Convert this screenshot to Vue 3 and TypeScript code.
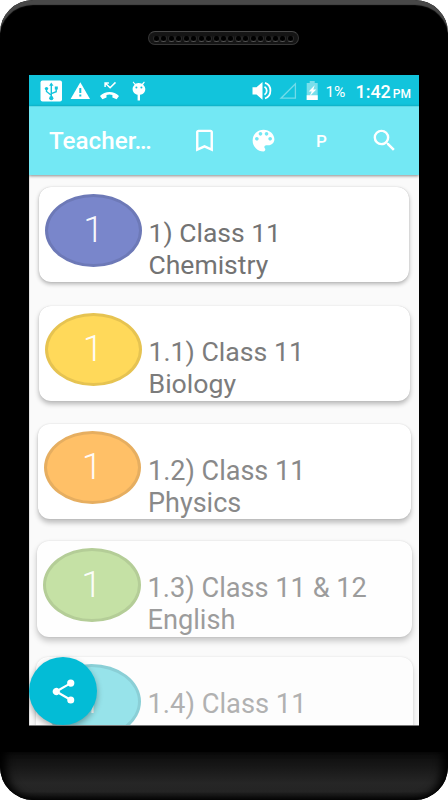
<script setup lang="ts">
interface Subject {
  id: string
  line1: string
  line2: string
  tone: string
}

const subjects: Subject[] = [
  { id: 'chemistry', line1: '1) Class 11', line2: 'Chemistry', tone: 'indigo' },
  { id: 'biology', line1: '1.1) Class 11', line2: 'Biology', tone: 'yellow' },
  { id: 'physics', line1: '1.2) Class 11', line2: 'Physics', tone: 'orange' },
  { id: 'english', line1: '1.3) Class 11 & 12', line2: 'English', tone: 'green' },
  { id: 'next', line1: '1.4) Class 11', line2: '', tone: 'cyan' },
]
const holes = 19
</script>

<template>
  <div class="phone">
    <div class="speaker"><span v-for="n in holes" :key="n" class="hole"></span></div>
    <div class="screen">
      <header class="status">
        <svg class="status-left" viewBox="0 0 110 31" width="110" height="31">
          <rect x="0.5" y="5.500" width="21.500" height="21" rx="2" fill="#fff" />
          <g fill="none" stroke="#12c4dc" stroke-width="1.400">
            <path d="M11.300 10v13M6.500 13.500v3l4.800 3.700M16.200 13v3.700l-4.900 2" />
          </g>
          <path d="M11.300 7.500l2.200 3.200h-4.400z" fill="#12c4dc" />
          <circle cx="11.300" cy="23.200" r="2.100" fill="#12c4dc" />
          <circle cx="6.500" cy="13.600" r="1.700" fill="#12c4dc" />
          <path d="M14.800 11.500h3v3h-3z" fill="#12c4dc" />
          <path d="M40.300 7.200L50 24H30.600z" fill="#fff" />
          <path d="M39.300 13h2v5h-2zM39.300 19.500h2v2h-2z" fill="#12c4dc" />
          <path d="M60 21c5-5.300 14-5.300 19 0l-2.400 3.300-4.200-1.800v-2.600c-1.900-.7-4-.7-5.900 0v2.600l-4.100 1.800z" fill="#fff" />
          <path d="M65.100 12V8h3.800M65.400 8.300l4.700 4.500 5.400-5.400" fill="none" stroke="#fff" stroke-width="1.500" />
          <path d="M93.200 6.500l2.200 2.300a7 7 0 0 1 6.600 0L104 6.500l.8.7-1.700 2.500c1.400 1.200 2.200 2.800 2.200 4.300 0 3.200-2.300 5.500-5.300 5.700V25.500h-2.400v-5.800c-2.900-.3-5-2.700-5-5.700 0-1.600.8-3.100 2-4.200l-1.900-2.600z" fill="#fff" />
          <circle cx="96.400" cy="12.500" r="1" fill="#12c4dc" />
          <circle cx="101.400" cy="12.500" r="1" fill="#12c4dc" />
        </svg>
        <div class="status-right">
          <svg viewBox="0 0 68 31" width="68" height="31">
            <path d="M1.500 12.200h4l6-5.200v17.700l-6-5.200h-4z" fill="#fff" />
            <path d="M13.500 11.700c3 1.800 3 6 0 8M14 7.800c7.200 2.200 7.200 13.400 0 15.700" fill="none" stroke="#fff" stroke-width="1.800" />
            <path d="M44.400 8.800v14.400H30z" fill="none" stroke="#71dbe9" stroke-width="1.300" />
            <path d="M55.700 8h3V6h5v2h3v17h-11z" fill="#79dfeb" />
            <path d="M55.700 20.200h11V25h-11z" fill="#fff" />
            <path d="M63.700 10.200l-6 6.300h3l-2 4.700 6.600-6.600h-3z" fill="#fff" />
          </svg>
          <span class="battery">1%</span>
          <span class="clock">1:42<small>PM</small></span>
        </div>
      </header>

      <div class="toolbar">
        <h1>Teacher…</h1>
        <div class="actions">
          <svg viewBox="0 0 24 24" width="29" height="29"><path d="M17 3H7c-1.100 0-2 .9-2 2v16l7-3 7 3V5c0-1.100-.9-2-2-2zm0 15l-5-2.180L7 18V5h10v13z" /></svg>
          <svg viewBox="0 0 24 24" width="29" height="29"><path d="M12 3a9 9 0 0 0 0 18c.83 0 1.500-.67 1.500-1.500 0-.39-.15-.74-.39-1.010-.23-.26-.38-.61-.38-.99 0-.83.67-1.500 1.500-1.500H16c2.760 0 5-2.240 5-5 0-4.420-4.030-8-9-8zm-5.500 9c-.83 0-1.500-.67-1.500-1.500S5.670 9 6.500 9 8 9.670 8 10.500 7.330 12 6.500 12zm3-4C8.670 8 8 7.330 8 6.500S8.670 5 9.500 5s1.500.67 1.500 1.500S10.330 8 9.500 8zm5 0c-.83 0-1.500-.67-1.500-1.500S13.670 5 14.500 5s1.500.67 1.500 1.500S15.330 8 14.500 8zm3 4c-.83 0-1.500-.67-1.500-1.500S16.670 9 17.500 9s1.500.67 1.500 1.500-.67 1.500-1.500 1.500z" /></svg>
          <span class="letter">P</span>
          <svg viewBox="0 0 24 24" width="29" height="29"><path d="M15.500 14h-.79l-.28-.27A6.471 6.471 0 0 0 16 9.500 6.500 6.500 0 1 0 9.500 16c1.610 0 3.090-.59 4.230-1.570l.27.28v.79l5 4.990L20.490 19l-4.990-5zm-6 0C7.010 14 5 11.990 5 9.500S7.010 5 9.500 5 14 7.010 14 9.500 11.990 14 9.500 14z" /></svg>
        </div>
      </div>

      <main class="list">
        <article v-for="s in subjects" :key="s.id" class="card" :class="s.tone">
          <div class="badge"><span>1</span></div>
          <p>{{ s.line1 }}<br />{{ s.line2 }}</p>
        </article>
      </main>

      <button class="share" aria-label="Share">
        <svg viewBox="0 0 24 24" width="29" height="29"><path d="M18 16.080c-.76 0-1.440.3-1.960.77L8.910 12.700c.05-.23.09-.46.09-.7s-.04-.47-.09-.7l7.050-4.110c.54.5 1.250.81 2.040.81a3 3 0 1 0-3-3c0 .24.04.47.09.7L8.040 9.810A3 3 0 1 0 6 15c.79 0 1.500-.31 2.040-.81l7.120 4.160c-.05.21-.08.43-.08.65A2.920 2.920 0 1 0 18 16.080z" /></svg>
      </button>
    </div>
    <div class="chin"></div>
  </div>
</template>

<style>
body {
  background: #fff;
  overflow: hidden;
}
</style>

<style scoped>
.phone {
  box-sizing: border-box;
  width: 448px;
  height: 800px;
  display: flex;
  flex-direction: column;
  align-items: center;
  overflow: hidden;
  border-radius: 33px;
  background: #000;
  box-shadow: inset 0 6px 1px -1px #484848;
  font-family: Roboto, "Liberation Sans", sans-serif;
}
.speaker {
  box-sizing: border-box;
  flex: none;
  width: 151px;
  height: 14px;
  margin: 31px 1px 30px 0;
  padding: 3px 4px 0;
  border: 1px solid #363636;
  border-top-color: #484848;
  border-radius: 7px;
  background: #151515;
  display: flex;
  justify-content: space-between;
}
.hole {
  box-sizing: border-box;
  width: 7px;
  height: 7px;
  border: 1px solid #292929;
  border-top-color: #151515;
  border-bottom-color: #555;
  border-radius: 50%;
  background: #000;
}
.screen {
  box-sizing: border-box;
  position: relative;
  flex: none;
  width: 390px;
  height: 651px;
  display: flex;
  flex-direction: column;
  overflow: hidden;
  border-bottom: 1px solid #777;
  background: #fafafa;
  box-shadow: inset 1px 0 #e4e4e4;
}
.status {
  flex: none;
  height: 31px;
  padding: 0 9px 0 11px;
  display: flex;
  justify-content: space-between;
  background: #12c4dc;
  color: #fff;
}
.status-right {
  display: flex;
  align-items: center;
}
.battery {
  width: 20px;
  margin-left: 6px;
  font-size: 15.5px;
  line-height: 31px;
  padding-top: 3px;
}
.clock {
  margin-left: 10px;
  margin-right: -1px;
  font-size: 18px;
  font-weight: 500;
  line-height: 31px;
  padding-top: 4px;
}
.clock small {
  margin-left: 2px;
  font-size: 12px;
}
.toolbar {
  z-index: 1;
  box-sizing: border-box;
  flex: none;
  height: 69px;
  padding: 0 20px;
  display: flex;
  align-items: center;
  justify-content: space-between;
  border-top: 1px solid #60d9e6;
  background: #73e8f4;
  color: #fff;
  box-shadow: 0 1px 3px rgba(0, 0, 0, 0.45);
}
h1 {
  margin: 0;
  padding-bottom: 1px;
  font-size: 24.2px;
  font-weight: 500;
}
.actions {
  display: flex;
  gap: 29px;
  align-items: center;
  margin-top: -1px;
}
.actions svg,
.share svg {
  display: block;
  fill: #fff;
}
.actions svg:first-child {
  margin-right: 1px;
}
.actions svg:nth-child(2) {
  margin-right: -1px;
}
.letter {
  width: 31px;
  margin-right: 4px;
  padding-top: 1px;
  text-align: center;
  font-size: 17px;
  font-weight: 500;
}
.list {
  padding: 12px 10px 0;
  display: flex;
  flex-direction: column;
}
.card {
  box-sizing: border-box;
  flex: none;
  height: 95px;
  margin-bottom: 24px;
  padding: 7px 0 0 6px;
  display: flex;
  gap: 7px;
  border-radius: 12px;
  background: #fff;
  box-shadow: 0 2px 4px rgba(0, 0, 0, 0.29), 0 0 1px rgba(0, 0, 0, 0.2);
}
.badge {
  box-sizing: border-box;
  flex: none;
  width: 97px;
  height: 73px;
  border: 3px solid;
  border-radius: 50%;
  display: grid;
  place-items: center;
  color: rgba(255, 255, 255, 0.95);
  font-size: 37px;
  font-weight: 300;
  line-height: 1;
}
.badge span {
  margin-top: -2px;
}
.card p {
  margin: 24px 0 0;
  color: #737373;
  font-size: 27px;
  line-height: 32px;
  white-space: nowrap;
}
.indigo .badge {
  background: #7986cb;
  border-color: #6d79b7;
}
.card.indigo p {
  margin: 23px 0 0 -0.5px;
  font-size: 26.5px;
}
.yellow {
  margin: 0 -0.5px 23px;
  box-shadow: 0 3px 5px rgba(0, 0, 0, 0.27), 0 0 1px rgba(0, 0, 0, 0.18);
}
.yellow .badge {
  background: #ffd95a;
  border-color: #e6c351;
}
.card.yellow p {
  margin-top: 23px;
  color: #7c7c7c;
  font-size: 26.7px;
}
.orange {
  margin: 0 -1.5px 22px;
  box-shadow: 0 4px 5px rgba(0, 0, 0, 0.23), 0 0 2px rgba(0, 0, 0, 0.14);
}
.orange .badge {
  background: #ffc067;
  border-color: #e6ae60;
}
.card.orange p {
  margin-left: 0.5px;
  color: #898989;
}
.green {
  height: 96px;
  margin: 0 -2.5px 20px;
  background: #fefefe;
  box-shadow: 0 4px 6px rgba(0, 0, 0, 0.21), 0 0 2px rgba(0, 0, 0, 0.12);
}
.green .badge {
  width: 98px;
  height: 74px;
  background: #c5e1a5;
  border-color: #b4cd97;
}
.card.green p {
  color: #9c9c9c;
  font-size: 27.2px;
}
.cyan {
  height: 96px;
  margin: 0 -3.5px;
  background: #fdfdfd;
  box-shadow: 0 4px 6px rgba(0, 0, 0, 0.15), 0 0 2px rgba(0, 0, 0, 0.1);
}
.cyan .badge {
  width: 99px;
  height: 75px;
  background: #97e3ea;
  border-color: #8acfd6;
}
.card.cyan p {
  color: #b1b1b1;
  font-size: 27.3px;
}
.share {
  position: absolute;
  left: 0;
  bottom: 0;
  width: 68px;
  height: 68px;
  padding: 0;
  display: grid;
  place-items: center;
  border: 0;
  border-radius: 50%;
  background: #03bcd6;
  box-shadow: 0 3px 6px rgba(0, 0, 0, 0.32);
}
.chin {
  flex: none;
  width: 448px;
  height: 48px;
  margin-top: 26px;
  border-radius: 0 0 33px 33px;
  background: linear-gradient(#0c0c0c, #171717 30%, #262626 65%, #242424 82%, #080808);
  box-shadow: inset 9px 0 9px -3px #000, inset -9px 0 9px -3px #000;
}
</style>
